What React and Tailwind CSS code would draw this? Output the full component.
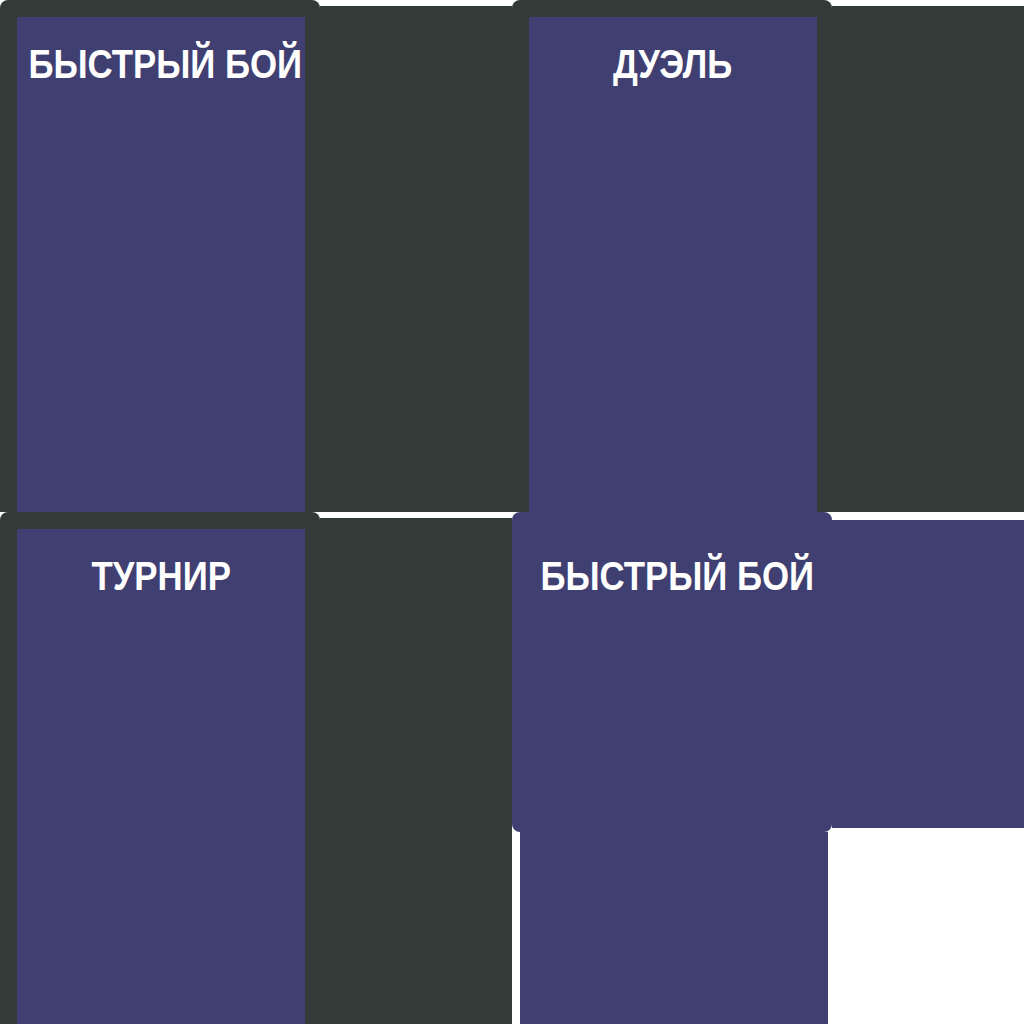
import React from "react";

const MODES = [
  { id: "quick", title: "БЫСТРЫЙ БОЙ", pad: "pl-[8px]" },
  { id: "duel", title: "ДУЭЛЬ", pad: "" },
  { id: "tour", title: "ТУРНИР", pad: "" },
  { id: "quick2", title: "БЫСТРЫЙ БОЙ", pad: "pl-[10px]", active: true },
];

function Title({ children, pad }) {
  return (
    <div className={`flex justify-center leading-none ${pad}`}>
      <span
        className="inline-block shrink-0 scale-x-[0.87] whitespace-nowrap text-[40px] font-bold uppercase text-white"
        style={{ fontFamily: '"Liberation Sans", Arial, sans-serif' }}
      >
        {children}
      </span>
    </div>
  );
}

function ModeCard({ title, pad }) {
  return (
    <div className="flex h-[512px] w-[512px]">
      <div className="w-[320px] shrink-0 rounded-t-[8px] bg-[#333b38] pt-[17px] pr-[15px] pl-[17px]">
        <div className="h-full bg-[#403f72] pt-[27px]">
          <Title pad={pad}>{title}</Title>
        </div>
      </div>
      <div className="mt-[6px] flex-1 bg-[#333b38]" />
    </div>
  );
}

// hovered / pressed state: border drops away, card slides
function ActiveCard({ title, pad }) {
  return (
    <div className="flex h-[512px] w-[512px] flex-col">
      <div className="flex h-[320px] shrink-0">
        <div className="w-[320px] shrink-0 rounded-[8px] bg-[#403f72] pt-[44px]">
          <Title pad={pad}>{title}</Title>
        </div>
        <div className="mt-[8px] mb-[4px] flex-1 bg-[#403f72]" />
      </div>
      <div className="ml-[8px] w-[308px] flex-1 bg-[#403f72]" />
    </div>
  );
}

export default function App() {
  return (
    <div className="grid h-[1024px] w-[1024px] grid-cols-[512px_512px] grid-rows-[512px_512px] overflow-hidden bg-white">
      {MODES.map((m) =>
        m.active ? (
          <ActiveCard key={m.id} title={m.title} pad={m.pad} />
        ) : (
          <ModeCard key={m.id} title={m.title} pad={m.pad} />
        )
      )}
    </div>
  );
}
